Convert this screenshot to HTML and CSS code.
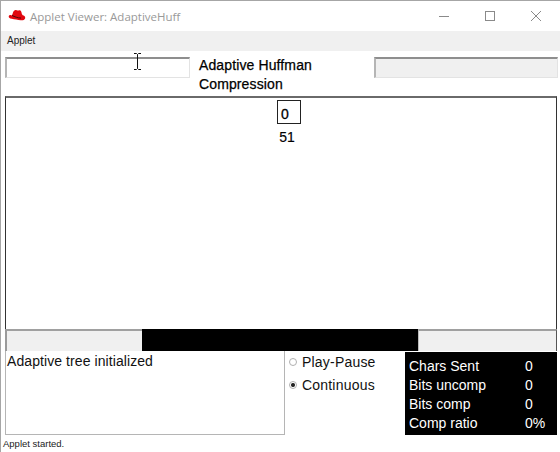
FILE: index.html
```html
<!DOCTYPE html>
<html lang="en">
<head>
<meta charset="utf-8">
<title>Applet Viewer: AdaptiveHuff</title>
<link rel="stylesheet" href="styles.css">
</head>
<body>
<div class="window">
  <header class="titlebar">
    <svg class="logo" width="18" height="14" viewBox="0 0 18 14"><path d="M5 3.500C5.600 1.600 7 .6 8.600 1.200c1 .3 1.800.3 2.800 0 1.200-.2 1.900 1 2.300 3 .1 1 .6 1.800 1.900 2.400 1.300.7 1.900 1.600 1.500 2.800-.5 1.400-2.200 2.100-4.400 1.900C9.800 11 6.500 10.300 3.800 9.800 1.500 9.500.3 8.300.8 7c.4-1.100 1.400-1 2.800-.6.700-.3 1-1.500 1.400-2.900z" fill="#e1080f"/><path d="M4 6.400c2.400 1.400 5.800 2.500 9 2.700" fill="none" stroke="#4a0a0a" stroke-width="1"/></svg>
    <span class="title">Applet Viewer: AdaptiveHuff</span>
    <div class="controls">
      <svg width="12" height="12" viewBox="0 0 12 12"><path d="M1 6.500h10" stroke="#8a8a8a" fill="none"/></svg>
      <svg width="12" height="12" viewBox="0 0 12 12"><rect x="1.500" y="1.500" width="9" height="9" stroke="#8a8a8a" fill="none"/></svg>
      <svg width="12" height="12" viewBox="0 0 12 12"><path d="M1 1l10 10M11 1L1 11" stroke="#8a8a8a" fill="none"/></svg>
    </div>
  </header>
  <nav class="menubar">Applet</nav>
  <main class="applet">
    <div class="toprow">
      <div class="field field-input"></div>
      <div class="heading">Adaptive Huffman Compression</div>
      <div class="field field-readonly"></div>
    </div>
    <section class="canvas">
      <div class="node">
        <div class="node-box">0</div>
        <div class="node-weight">51</div>
      </div>
    </section>
    <div class="slider">
      <div class="track track-left"></div>
      <div class="thumb"></div>
      <div class="track track-right"></div>
    </div>
    <div class="bottomrow">
      <div class="log">Adaptive tree initialized</div>
      <div class="radios">
        <div class="radio"><span class="dot"></span>Play-Pause</div>
        <div class="radio"><span class="dot dot-on"></span>Continuous</div>
      </div>
      <div class="stats">
        <span>Chars Sent</span><span>0</span>
        <span>Bits uncomp</span><span>0</span>
        <span>Bits comp</span><span>0</span>
        <span>Comp ratio</span><span>0%</span>
      </div>
    </div>
  </main>
  <footer class="status">Applet started.</footer>
  <svg class="ibeam" width="9" height="17" viewBox="0 0 9 17"><path d="M1 .5h2.500L4.500 1.500 5.500.5H8M4.500 1.500v14M1 16.500h2.500l1-1 1 1H8" fill="none" stroke="#111"/></svg>
</div>
</body>
</html>
```
FILE: styles.css
```css
* { box-sizing: border-box; }
html, body { margin: 0; padding: 0; }
body { width: 560px; height: 452px; overflow: hidden; background: #fff; font-family: "Liberation Sans", Arial, sans-serif; color: #000; }
.window { position: relative; width: 560px; height: 452px; border: 1px solid #a6a6a6; border-width: 1px 0 0 1px; background: #fff; display: flex; flex-direction: column; }
.titlebar { height: 30px; flex: none; display: flex; align-items: center; padding-left: 7px; background: #fff; }
.logo { flex: none; }
.title { margin-left: 4px; font-family: "Open Sans", sans-serif; font-size: 11.500px; color: #999; }
.controls { margin-left: auto; display: flex; align-items: center; gap: 34px; padding-right: 18px; }
.controls svg { display: block; }
.menubar { height: 20px; flex: none; background: #f0f0f0; padding: 3px 0 0 6px; font-size: 10px; line-height: 14px; color: #222; }
.applet { flex: none; padding: 6px 2px 0 4px; }
.toprow { display: grid; grid-template-columns: 185px 184px 184px; height: 39px; }
.field { height: 21px; border: 1px solid #e3e3e3; border-top: 2px solid #8e8e8e; border-left: 2px solid #b5b5b5; }
.field-input { background: #fff; }
.field-readonly { background: #f0f0f0; }
.heading { padding: 0 9px; margin-top: -1px; font-size: 14px; letter-spacing: .12px; line-height: 19px; -webkit-text-stroke: .25px #000; }
.canvas { position: relative; height: 233px; border: 1px solid #333; border-top: 2px solid #6a6a6a; border-bottom: 0; margin-right: 1px; }
.node { position: absolute; left: 271px; top: 2px; width: 24px; display: flex; flex-direction: column; align-items: center; }
.node-box { width: 24px; height: 24px; border: 1px solid #222; padding-right: 8px; text-align: center; font-size: 14px; line-height: 27px; -webkit-text-stroke: .3px #000; }
.node-weight { margin-top: 4px; padding-right: 4px; font-size: 14px; line-height: 18px; -webkit-text-stroke: .15px #000; }
.slider { display: flex; height: 22px; margin-right: 1px; background: #000; }
.track { background: #f0f0f0; border-top: 2px solid #a0a0a0; }
.track-left { width: 137px; border-left: 2px solid #9a9a9a; }
.thumb { width: 276px; background: #000; }
.track-right { width: 139px; border-right: 1px solid #555; border-left: 1px solid #bbb; }
.bottomrow { display: flex; height: 85px; }
.log { width: 280px; height: 84px; border: 1px solid #b5b5b5; border-top: 0; padding: 2px 0 0 1px; font-size: 14px; letter-spacing: .08px; line-height: 17px; color: #111; }
.radios { width: 120px; padding: 1px 0 0 4px; display: flex; flex-direction: column; gap: 4px; }
.radio { display: flex; align-items: center; height: 19px; font-size: 14px; letter-spacing: .2px; color: #111; }
.dot { width: 8px; height: 8px; margin-right: 5px; border-radius: 50%; border: 1px solid #b0b0b0; background: #fff; flex: none; }
.dot-on { background: radial-gradient(circle, #222 0 1.500px, #fff 2.500px); }
.stats { width: 152px; height: 83px; margin-top: 1px; background: #000; color: #fff; padding: 5px 0 0 4px; display: grid; grid-template-columns: 116px 1fr; grid-auto-rows: 19px; font-size: 14px; line-height: 19px; }
.status { flex: none; padding: 0 0 0 2px; font-size: 9.500px; line-height: 15px; color: #222; }
.ibeam { position: absolute; left: 132px; top: 52px; }
```
